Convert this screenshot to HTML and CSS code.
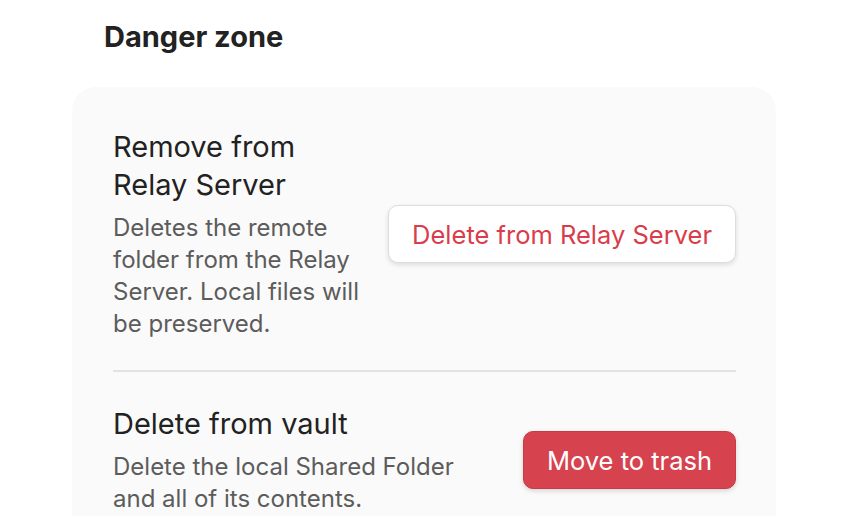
FILE: index.html
```html
<!DOCTYPE html>
<html>
<head>
<meta charset="utf-8">
<link rel="stylesheet" href="styles.css">
</head>
<body>
<div class="page">
  <h2 class="heading">Danger zone</h2>
  <div class="card">
    <div class="item">
      <div class="info">
        <div class="name">Remove from Relay Server</div>
        <div class="desc">Deletes the remote folder from the Relay Server. Local files will be preserved.</div>
      </div>
      <div class="control">
        <button class="btn btn-outline">Delete from Relay Server</button>
      </div>
    </div>
    <div class="item item-sep">
      <div class="info">
        <div class="name">Delete from vault</div>
        <div class="desc">Delete the local Shared Folder and all of its contents.</div>
      </div>
      <div class="control">
        <button class="btn btn-danger">Move to trash</button>
      </div>
    </div>
  </div>
</div>
</body>
</html>
```
FILE: styles.css
```css
html, body {
  margin: 0;
  padding: 0;
  background: #ffffff;
  font-family: Inter, "Noto Sans", sans-serif;
  overflow: hidden;
}
.page {
  padding: 0 72px;
  width: 704px;
}
.heading {
  margin: 0;
  padding: 18px 0 0 32px;
  height: 87px;
  box-sizing: border-box;
  font-size: 29px;
  font-weight: 700;
  color: #222222;
  line-height: 38px;
}
.card {
  background: #fafafa;
  border-radius: 24px;
  padding: 41px 40px 40px 41px;
  height: 600px;
}
.item {
  display: flex;
  align-items: center;
  padding-bottom: 30px;
}
.item-sep {
  border-top: 2px solid #e2e2e2;
  padding-top: 33px;
}
.info {
  flex: 1 1 auto;
  margin-right: 27px;
}
.name {
  font-size: 29px;
  line-height: 38px;
  color: #222222;
  padding-bottom: 8px;
}
.desc {
  font-size: 24px;
  line-height: 32px;
  color: #5c5c5c;
}
.control {
  flex: 0 0 auto;
}
.btn {
  font-family: Inter, "Noto Sans", sans-serif;
  font-size: 25.5px;
  border-radius: 10px;
  height: 58px;
  padding: 0 23px;
  cursor: pointer;
}
.btn-outline {
  background: #ffffff;
  color: #d93d4b;
  border: 1px solid #dddddd;
  box-shadow: 0 2px 5px rgba(0,0,0,0.12);
}
.btn-danger {
  background: #d6434f;
  color: #ffffff;
  border: 1px solid #c73a46;
  box-shadow: 0 2px 5px rgba(0,0,0,0.15);
}
```
